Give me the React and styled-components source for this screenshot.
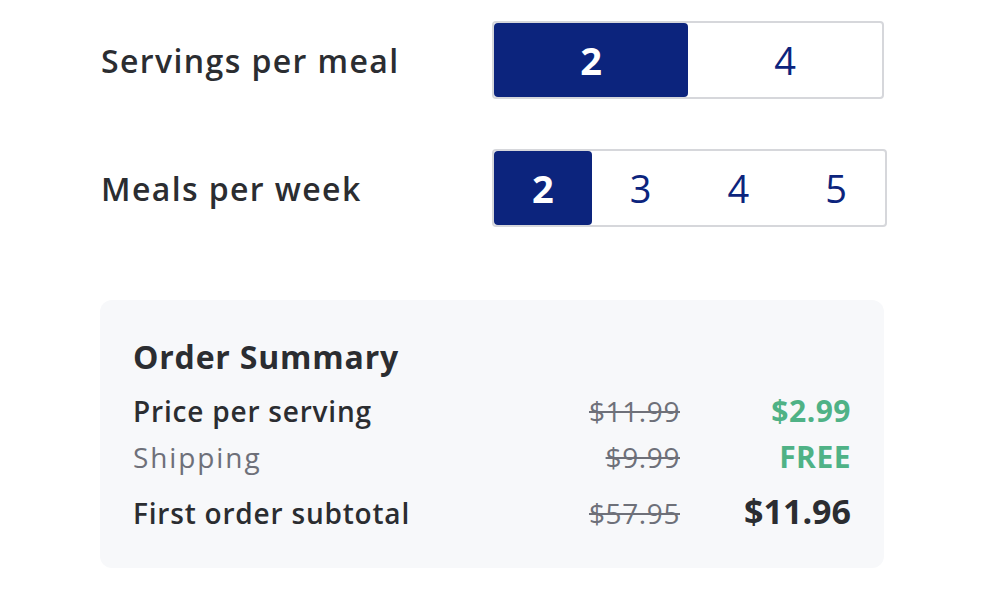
import React, { useState } from "react";
import styled, { createGlobalStyle } from "styled-components";

const Global = createGlobalStyle`
  html, body { margin: 0; padding: 0; background: #ffffff; }
  body { font-family: "Open Sans", "Noto Sans", sans-serif; color: #2b2d31; }
`;

const Page = styled.div`
  padding: 21px 0 0 100px;
  display: flex;
  flex-direction: column;
`;

const OptionRow = styled.div`
  display: flex;
  align-items: center;
  margin-bottom: ${(p) => p.$gap}px;
`;

const Label = styled.div`
  width: 392px;
  padding-left: 1px;
  box-sizing: border-box;
  font-size: 32px;
  font-weight: 600;
  color: #2b2d31;
  letter-spacing: 1.4px;
`;

const Segmented = styled.div`
  width: ${(p) => p.$width}px;
  height: 78px;
  box-sizing: border-box;
  border: 2px solid #d6d7db;
  border-radius: 4px;
  display: grid;
  grid-template-columns: repeat(${(p) => p.$count}, 1fr);
  background: #fff;
`;

const Segment = styled.button`
  border: none;
  margin: 0;
  padding: 0;
  font-family: inherit;
  font-size: 38px;
  font-weight: ${(p) => (p.$active ? 700 : 500)};
  color: ${(p) => (p.$active ? "#ffffff" : "#0c247d")};
  background: ${(p) => (p.$active ? "#0c247d" : "transparent")};
  border-radius: 4px;
  cursor: pointer;
  display: flex;
  align-items: center;
  justify-content: center;
`;

const Card = styled.div`
  width: 784px;
  height: 268px;
  box-sizing: border-box;
  background: #f7f8fa;
  border-radius: 12px;
  padding: 35px 33px 0 33px;
`;

const Title = styled.div`
  font-size: 32px;
  font-weight: 700;
  color: #2b2d31;
  margin-bottom: 12px;
  letter-spacing: 0.8px;
`;

const Line = styled.div`
  display: grid;
  grid-template-columns: 1fr 160px 171px;
  align-items: baseline;
  height: ${(p) => p.$h}px;
`;

const LineLabel = styled.div`
  font-size: 28px;
  font-weight: ${(p) => (p.$muted ? 400 : 600)};
  color: ${(p) => (p.$muted ? "#6e7079" : "#2b2d31")};
  letter-spacing: ${(p) => (p.$muted ? 1.9 : 0.8)}px;
`;

const Strike = styled.div`
  text-align: right;
  font-size: 28px;
  color: #6e7079;
  letter-spacing: 0.6px;
  text-decoration: line-through;
  text-decoration-thickness: 2px;
`;

const Value = styled.div`
  text-align: right;
  font-size: ${(p) => (p.$big ? 34 : 30)}px;
  font-weight: 700;
  color: ${(p) => (p.$green ? "#4fb286" : "#2b2d31")};
  letter-spacing: ${(p) => (p.$green ? 0.5 : 0)}px;
`;

export default function App() {
  const [servings, setServings] = useState(2);
  const [meals, setMeals] = useState(2);
  return (
    <>
      <Global />
      <Page>
        <OptionRow $gap={50}>
          <Label>Servings per meal</Label>
          <Segmented $width={392} $count={2}>
            {[2, 4].map((n) => (
              <Segment key={n} $active={servings === n} onClick={() => setServings(n)}>
                {n}
              </Segment>
            ))}
          </Segmented>
        </OptionRow>
        <OptionRow $gap={73}>
          <Label>Meals per week</Label>
          <Segmented $width={395} $count={4}>
            {[2, 3, 4, 5].map((n) => (
              <Segment key={n} $active={meals === n} onClick={() => setMeals(n)}>
                {n}
              </Segment>
            ))}
          </Segmented>
        </OptionRow>
        <Card>
          <Title>Order Summary</Title>
          <Line $h={46}>
            <LineLabel>Price per serving</LineLabel>
            <Strike>$11.99</Strike>
            <Value $green>$2.99</Value>
          </Line>
          <Line $h={52}>
            <LineLabel $muted>Shipping</LineLabel>
            <Strike>$9.99</Strike>
            <Value $green>FREE</Value>
          </Line>
          <Line $h={50}>
            <LineLabel>First order subtotal</LineLabel>
            <Strike>$57.95</Strike>
            <Value $big>$11.96</Value>
          </Line>
        </Card>
      </Page>
    </>
  );
}
